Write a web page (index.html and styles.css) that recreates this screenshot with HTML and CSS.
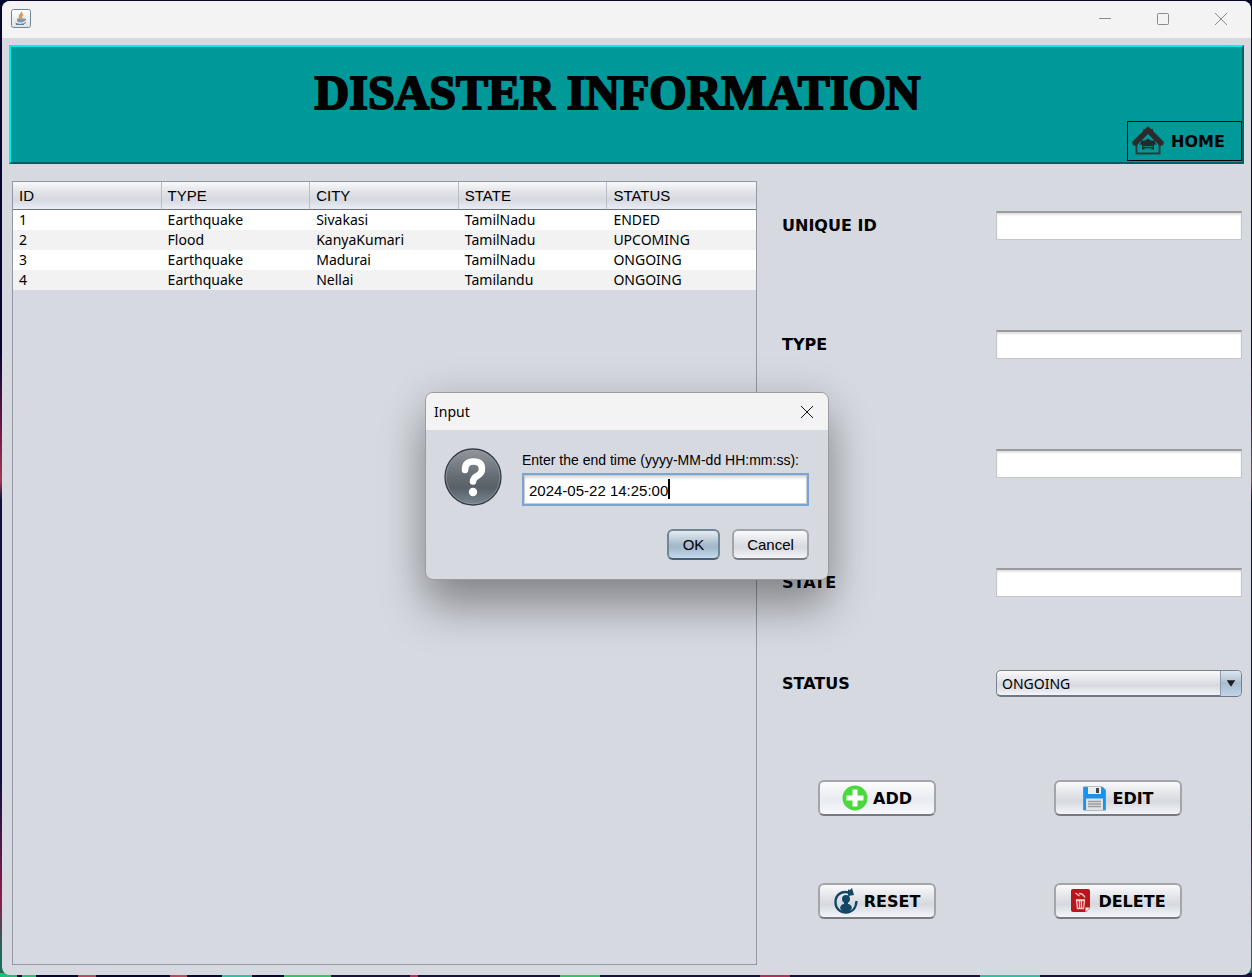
FILE: index.html
```html
<!DOCTYPE html>
<html lang="en">
<head>
<meta charset="utf-8">
<title>Disaster Information</title>
<link rel="stylesheet" href="styles.css">
</head>
<body>
<div class="window">
  <header class="titlebar">
    <svg class="java-icon" width="20" height="19" viewBox="0 0 20 19" aria-hidden="true">
      <defs><linearGradient id="tile" x2="0" y2="1"><stop stop-color="#fff"/><stop offset="1" stop-color="#dfe2e6"/></linearGradient></defs>
      <rect x=".5" y=".5" width="19" height="18" rx="2" fill="url(#tile)" stroke="#6f8798"/>
      <path d="M10.500 3c1 2-3 3-2 5l1 1.500M12 5.500c-2 1-2 2-1 3.500" fill="none" stroke="#e88b3c" stroke-width="1.600"/>
      <path d="M6 9.500h7v2.500q-1 1.500-3.500 1.500T6 12z" fill="#7d96ab"/>
      <path d="M13 10h1.500q0 2-2 2M4.500 14q5 3 10.500-.5M5 15.500h8" fill="none" stroke="#607f98"/>
    </svg>
    <div class="window-controls">
      <button type="button" aria-label="Minimize"><svg width="14" height="14" viewBox="0 0 14 14"><path d="M1 6.500h12"/></svg></button>
      <button type="button" aria-label="Maximize"><svg width="14" height="14" viewBox="0 0 14 14"><rect x="1.500" y="1.500" width="11" height="11" rx="1"/></svg></button>
      <button type="button" aria-label="Close"><svg width="14" height="14" viewBox="0 0 14 14"><path d="M1 1l12 12M13 1L1 13"/></svg></button>
    </div>
  </header>

  <div class="banner">
    <h1>DISASTER INFORMATION</h1>
    <button type="button" class="home">
      <svg width="34" height="30" viewBox="0 0 34 30" aria-hidden="true">
        <path d="M5.500 15v12.500h23V15" fill="none" stroke="#33393b" stroke-width="2"/>
        <path d="M17 0l3 3h2v2l11 11-1 3-3 1L17 8 5 20l-3-1-1-3L12 5V3h2z" fill="#2b2b2b"/>
        <path d="M17 12.500l3 2h4v2l2 2h-3v5H11v-5H8l2-2v-2h4z" fill="#26292a"/>
        <path d="M12 20.500h10" stroke="#0b7f80"/>
        <path d="M13.500 23h7" stroke="#0b9293" stroke-width="1.500"/>
      </svg>
      HOME
    </button>
  </div>

  <main class="content">
    <div class="table-pane">
      <table>
        <thead><tr><th>ID</th><th>TYPE</th><th>CITY</th><th>STATE</th><th>STATUS</th></tr></thead>
        <tbody>
          <tr><td>1</td><td>Earthquake</td><td>Sivakasi</td><td>TamilNadu</td><td>ENDED</td></tr>
          <tr><td>2</td><td>Flood</td><td>KanyaKumari</td><td>TamilNadu</td><td>UPCOMING</td></tr>
          <tr><td>3</td><td>Earthquake</td><td>Madurai</td><td>TamilNadu</td><td>ONGOING</td></tr>
          <tr><td>4</td><td>Earthquake</td><td>Nellai</td><td>Tamilandu</td><td>ONGOING</td></tr>
        </tbody>
      </table>
    </div>

    <form class="details">
      <div class="fields">
        <label for="uid">UNIQUE ID</label><input id="uid" type="text">
        <label for="type">TYPE</label><input id="type" type="text">
        <input id="city" type="text" aria-label="City">
        <label for="state">STATE</label><input id="state" type="text">
      </div>
      <div class="status">
        <label for="status">STATUS</label>
        <div class="combo">
          <select id="status"><option>ONGOING</option></select>
          <svg class="combo-arrow" width="21" height="25" viewBox="0 0 21 25" aria-hidden="true"><path d="M6 9h9l-4.500 7z" fill="#1b1f24"/></svg>
        </div>
      </div>
      <div class="actions">
        <button type="button" class="action add">
          <svg width="26" height="26" viewBox="0 0 26 26" aria-hidden="true"><circle cx="13" cy="13" r="12.500" fill="#4bd83f"/><path d="M13 4.500v17M4.500 13h17" stroke="#fff" stroke-width="5"/></svg>
          ADD
        </button>
        <button type="button" class="action edit">
          <svg width="25" height="25" viewBox="0 0 25 25" aria-hidden="true"><path d="M1.500 1h19l3 3v20h-22z" fill="#1593f3" stroke="#7b8c9b"/><path d="M6 1h13v7H6z" fill="#e9edf0"/><path d="M14 2h3v5h-3z" fill="#40464b"/><path d="M4 12.500h17V24H4z" fill="#dfe1e2"/><path d="M6 15.500h13M6 18h13M6 20.500h13" stroke="#9c9fa1" stroke-width="1.400"/></svg>
          EDIT
        </button>
        <button type="button" class="action reset">
          <svg width="25" height="26" viewBox="0 0 25 26" aria-hidden="true"><path d="M15 4.500C6 2.500 1.500 8 1.500 14c0 7 5 10.500 10.500 10.500S22 21 22.500 13" fill="none" stroke="#134766" stroke-width="2.400"/><path d="M14 1.500l2 .5 2-2 2 7-6 1z" fill="#134766"/><circle cx="12" cy="11" r="4" fill="#134766"/><path d="M10 13h4v3q3 0 4 4-2 4-6 4t-6-4q1-4 4-4z" fill="#134766"/></svg>
          RESET
        </button>
        <button type="button" class="action delete">
          <svg width="21" height="24" viewBox="0 0 21 24" aria-hidden="true"><path d="M3 0h15q2 0 2 2v17l-4 4H3q-2 0-2-2V2q0-2 2-2z" fill="#b9151b"/><path d="M15.500 18.500H20l-4.500 4.500z" fill="#f2eeee"/><path d="M6.500 11.500h8l-1 8h-6z" fill="none" stroke="#f5caca" stroke-width="1.300"/><path d="M9.500 12v7M11.500 12v7M6 11h9M5.500 4l4 3M9 4.500q4 0 6 4" fill="none" stroke="#f5caca" stroke-width="1.300"/></svg>
          DELETE
        </button>
      </div>
    </form>
  </main>
</div>

<div class="dialog" role="dialog" aria-labelledby="dialog-title">
  <header class="dialog-bar">
    <span id="dialog-title">Input</span>
    <button type="button" aria-label="Close dialog"><svg width="14" height="14" viewBox="0 0 14 14"><path d="M1 1l12 12M13 1L1 13"/></svg></button>
  </header>
  <form class="dialog-body">
    <div class="prompt-row">
      <svg class="question" width="58" height="58" viewBox="0 0 58 58" aria-hidden="true">
        <defs><linearGradient id="orb" x2="0" y2="1"><stop stop-color="#92979d"/><stop offset=".5" stop-color="#646b73"/><stop offset=".7" stop-color="#596168"/><stop offset="1" stop-color="#7a8791"/></linearGradient></defs>
        <circle cx="29" cy="29" r="28" fill="url(#orb)" stroke="#343b45" stroke-width="1.300"/>
        <circle cx="29" cy="29" r="26.800" fill="none" stroke="#a0a8af" stroke-opacity=".5"/>
        <path d="M21 22q0-8.500 8.500-8.500T38 21q0 4-4 6.500-5 2.500-5 6" fill="none" stroke="#fff" stroke-width="6.500" stroke-linecap="round"/>
        <circle cx="29" cy="44" r="4.200" fill="#fff"/>
      </svg>
      <div class="prompt">
        <label for="endtime">Enter the end time (yyyy-MM-dd HH:mm:ss):</label>
        <div class="entry"><input id="endtime" type="text" value="2024-05-22 14:25:00"><span class="caret"></span></div>
      </div>
    </div>
    <div class="dialog-actions">
      <button type="button" class="ok">OK</button>
      <button type="button" class="cancel">Cancel</button>
    </div>
  </form>
</div>
</body>
</html>
```
FILE: styles.css
```css
* { box-sizing: border-box; }

body {
  margin: 0;
  min-height: 100vh;
  display: flex;
  padding: 1px 1px 2px 2px;
  color: #000;
  font: 15px "Liberation Sans", Arial, sans-serif;
  background:
    linear-gradient(90deg, #2bb77c 0 17px, #07072b 17px 22px, #2bc07a 22px 36px, #07072b 36px 78px, #b54a62 78px 96px, #07072b 96px 170px, #b54a62 170px 187px, #07072b 187px 222px, #2cc3a0 222px 252px, #07072b 252px 284px, #35c46a 284px 331px, #16123a 331px 410px, #b0305c 410px 418px, #16123a 418px 560px, #35c46a 560px 600px, #16123a 600px 760px, #b0305c 760px 790px, #16123a 790px 980px, #2cc3a0 980px 1040px, #16123a 1040px) bottom / 100% 4px no-repeat,
    linear-gradient(#050530 0 350px, #7a1d4c 440px, #a03b55 480px, #10103c 500px 780px, #8b1e50 900px, #206a5a 950px);
}

button { font: inherit; color: inherit; padding: 0; }
button svg { flex: none; }

.window {
  flex: 1;
  display: flex;
  flex-direction: column;
  background: #d6d9e0;
  border-radius: 8px;
  overflow: hidden;
}

.titlebar {
  height: 37px;
  padding: 0 23px 2px 9px;
  display: flex;
  align-items: center;
  justify-content: space-between;
  background: #f3f3f3;
}

.window-controls { display: flex; gap: 44px; }

.window-controls button,
.dialog-bar button {
  display: flex;
  border: 0;
  background: none;
}

.window-controls svg,
.dialog-bar svg { fill: none; stroke: #8b8b8b; }

.banner {
  margin: 7px 7px 17px;
  height: 119px;
  padding-bottom: 1px;
  display: flex;
  flex-direction: column;
  justify-content: space-between;
  background: #009999;
  border: 2px solid;
  border-color: #00f0f0 #006666 #006060 #00f0f0;
}

.banner h1 {
  margin: 0;
  padding: 18px 18px 0 0;
  text-align: center;
  font: bold 48px/56px "Liberation Serif", serif;
  -webkit-text-stroke: 2px #000;
}

.home {
  align-self: flex-end;
  width: 115px;
  height: 40px;
  padding-left: 3px;
  display: flex;
  align-items: center;
  gap: 6px;
  background: none;
  border: 1px solid #000;
  font: bold 16px "DejaVu Sans", Verdana, sans-serif;
}

.content {
  flex: 1;
  padding: 0 9px 10px 10px;
  display: grid;
  grid-template-columns: 745fr 460fr;
  gap: 25px;
}

.table-pane { border: 1px solid #9297a1; }

table {
  width: 100%;
  table-layout: fixed;
  border-collapse: separate;
  border-spacing: 0;
  font: 14px/20px "Noto Sans", Tahoma, sans-serif;
}

th {
  height: 28px;
  padding: 0 6px;
  text-align: left;
  font: 15px "Liberation Sans", Arial, sans-serif;
  background: linear-gradient(#fafafb, #e2e4e8 35%, #d6d9df 65%, #e9edf5);
  border-right: 1px solid #b9bdc6;
  border-bottom: 1px solid #6f7377;
}

th:last-child { border-right: 0; }
td { height: 20px; padding: 0 6px; background: #fff; }
tbody tr:nth-child(even) td { background: #f2f2f2; }

.details {
  padding-top: 30px;
  font: bold 16px "DejaVu Sans", Verdana, sans-serif;
}

.fields,
.status {
  display: grid;
  grid-template-columns: 214px 1fr;
  align-items: center;
}

.fields { row-gap: 90px; }

.fields input {
  grid-column: 2;
  width: 100%;
  height: 29px;
  border: 1px solid #c4c6ca;
  border-top: 2px solid #9a9b9e;
  background: #fff;
  box-shadow: inset 0 2px 2px #e2e2e2;
}

.status { margin-top: 73px; }
.combo { position: relative; display: flex; }

select {
  appearance: none;
  width: 100%;
  height: 27px;
  padding: 0 26px 0 5px;
  border: 1px solid #7c828c;
  border-bottom: 2px solid #6f7784;
  border-radius: 5px;
  background: linear-gradient(#fafafb, #dfe1e6 45%, #d6d9df 60%, #f2f4fa);
  color: #000;
  font: 14px "Noto Sans", Tahoma, sans-serif;
}

.combo-arrow {
  position: absolute;
  top: 1px;
  right: 1px;
  border-left: 1px solid #8d9bab;
  border-radius: 0 4px 4px 0;
  background: linear-gradient(#dce6ef, #a9bdce 50%, #bfd5ea);
  pointer-events: none;
}

.actions {
  margin-top: 83px;
  display: grid;
  grid-template-columns: 190px 1fr;
  gap: 67px 22px;
  justify-items: center;
}

.action {
  width: 128px;
  height: 36px;
  display: flex;
  align-items: center;
  justify-content: center;
  gap: 5px;
}

.action,
.ok,
.cancel {
  border: 2px solid #a2a5aa;
  border-bottom-color: #777a80;
  border-radius: 6px;
  background: linear-gradient(#fafafb, #e1e3e7 40%, #d6d9df 60%, #f3f5fb);
}

.add,
.reset { width: 118px; }
.add { background: linear-gradient(#fcfcfd, #e8ebf1 55%, #f7f9fd); }
.delete { gap: 7px; }

.dialog {
  position: absolute;
  inset: 0 0 5px 2px;
  margin: auto;
  width: 404px;
  height: fit-content;
  border: 1px solid #9a9ca1;
  border-radius: 8px;
  background: #d6d9e0;
  box-shadow: 0 28px 44px rgba(0, 0, 0, .34), 0 0 40px rgba(0, 0, 0, .1);
}

.dialog-bar {
  height: 37px;
  padding: 0 14px 0 8px;
  display: flex;
  align-items: center;
  justify-content: space-between;
  background: #f3f3f3;
  border-radius: 7px 7px 0 0;
  font: 14px "Noto Sans", sans-serif;
}

.dialog-bar svg { stroke: #111; }
.dialog-body { padding: 18px 19px 19px 18px; }
.prompt-row { display: flex; gap: 20px; }
.question { flex: none; }
.prompt { flex: 1; min-width: 0; }
.prompt label { display: block; font-size: 14px; line-height: 25px; white-space: nowrap; }
.entry { position: relative; }

.entry input {
  display: block;
  width: 100%;
  height: 33px;
  padding: 2px 5px 0;
  border: 2px solid #7ba4cf;
  background: #fff;
  box-shadow: inset 0 0 0 1px #c9ccd0, inset 0 3px 3px #dcdcdc;
  font: inherit;
  outline: 0;
}

.caret {
  position: absolute;
  top: 6px;
  left: 146px;
  width: 2px;
  height: 20px;
  background: #000;
}

.dialog-actions {
  margin-top: 23px;
  display: flex;
  justify-content: flex-end;
  gap: 12px;
}

.dialog-actions button { height: 31px; }
.cancel { width: 77px; }

.ok {
  width: 53px;
  border-color: #72869a;
  border-bottom-color: #4b6073;
  background: linear-gradient(#e5ecf2, #a8bccb 50%, #a3b8c9 60%, #c3daef);
}
```
